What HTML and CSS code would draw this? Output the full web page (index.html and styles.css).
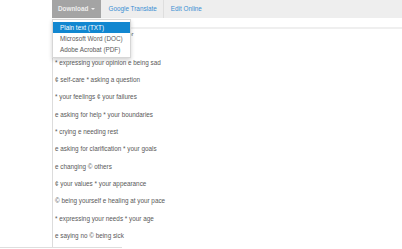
FILE: index.html
```html
<!DOCTYPE html>
<html lang="en">
<head>
  <meta charset="UTF-8" />
  <title>Things to stop apologizing for</title>
  <link rel="stylesheet" href="styles.css">
</head>
<body>
  <div class="layout">
    <div class="side"></div>
    <div class="main">
      <div class="toolbar">
        <div class="tool download">Download <span class="caret"></span></div>
        <div class="tool link sep">Google Translate</div>
        <div class="tool link">Edit Online</div>
      </div>

      <ul class="menu">
        <li class="active">Plain text (TXT)</li>
        <li>Microsoft Word (DOC)</li>
        <li>Adobe Acrobat (PDF)</li>
      </ul>

      <div class="content">
        <h1 class="title">Things to stop apologizing for</h1>
        <p class="line">* expressing your opinion e being sad</p>
        <p class="line">¢ self-care * asking a question</p>
        <p class="line">* your feelings ¢ your failures</p>
        <p class="line">e asking for help * your boundaries</p>
        <p class="line">* crying e needing rest</p>
        <p class="line">e asking for clarification * your goals</p>
        <p class="line">e changing © others</p>
        <p class="line">¢ your values * your appearance</p>
        <p class="line">© being yourself e healing at your pace</p>
        <p class="line">* expressing your needs * your age</p>
        <p class="line">e saying no © being sick</p>
      </div>
    </div>
  </div>
  <div class="foot-rule"></div>
</body>
</html>
```

FILE: styles.css
```css
* { box-sizing: border-box; margin: 0; padding: 0; }
html, body {
  background: #fff;
  font-family: 'Liberation Sans', Arial, sans-serif;
  font-size: 6.35px;
  color: #595959;
}
.layout {
  display: flex;
}
.side {
  width: 52px;
  flex: none;
}
.main {
  flex: 1;
  position: relative;
}
.toolbar {
  display: flex;
  height: 18px;
  background: #eeeeee;
  line-height: 18px;
}
.tool {
  padding: 0 6.5px;
  white-space: nowrap;
}
.download {
  padding: 0 6px;
  width: 49px;
  height: 17.5px;
  line-height: 17.5px;
  background: #a4a4a4;
  color: #eeeeee;
  font-weight: bold;
  margin-right: 1px;
}
.caret {
  display: inline-block;
  width: 0; height: 0;
  margin-left: 1px;
  vertical-align: 1px;
  border-left: 2px solid transparent;
  border-right: 2px solid transparent;
  border-top: 2px solid #eeeeee;
}
.link {
  color: #3c8fd3;
}
.sep {
  border-right: 1px solid #dedede;
}

/* dropdown */
.menu {
  list-style: none;
  position: absolute;
  top: 19px; left: 0;
  width: 79px;
  padding: 2px 0;
  background: #fff;
  border: 1px solid #d6d6d6;
  box-shadow: 0 2px 4px rgba(0, 0, 0, 0.18);
  z-index: 10;
}
.menu li {
  height: 11px;
  line-height: 11px;
  padding-left: 7px;
  color: #5a5a5a;
  white-space: nowrap;
}
.menu li.active {
  background: #1287d0;
  color: #fff;
}

.content {
  margin-top: 9px;
  border-top: 2px solid #efefef;
  border-left: 1px solid #dcdcdc;
  padding-left: 2px;
  padding-bottom: 3px;
}
.title {
  font-size: 6px;
  font-weight: normal;
  line-height: 10px;
  margin-bottom: 14.5px;
  white-space: nowrap;
}
.line {
  line-height: 17.36px;
  white-space: nowrap;
}
.foot-rule {
  width: 122px;
  height: 1px;
  background: #dedede;
}
```
